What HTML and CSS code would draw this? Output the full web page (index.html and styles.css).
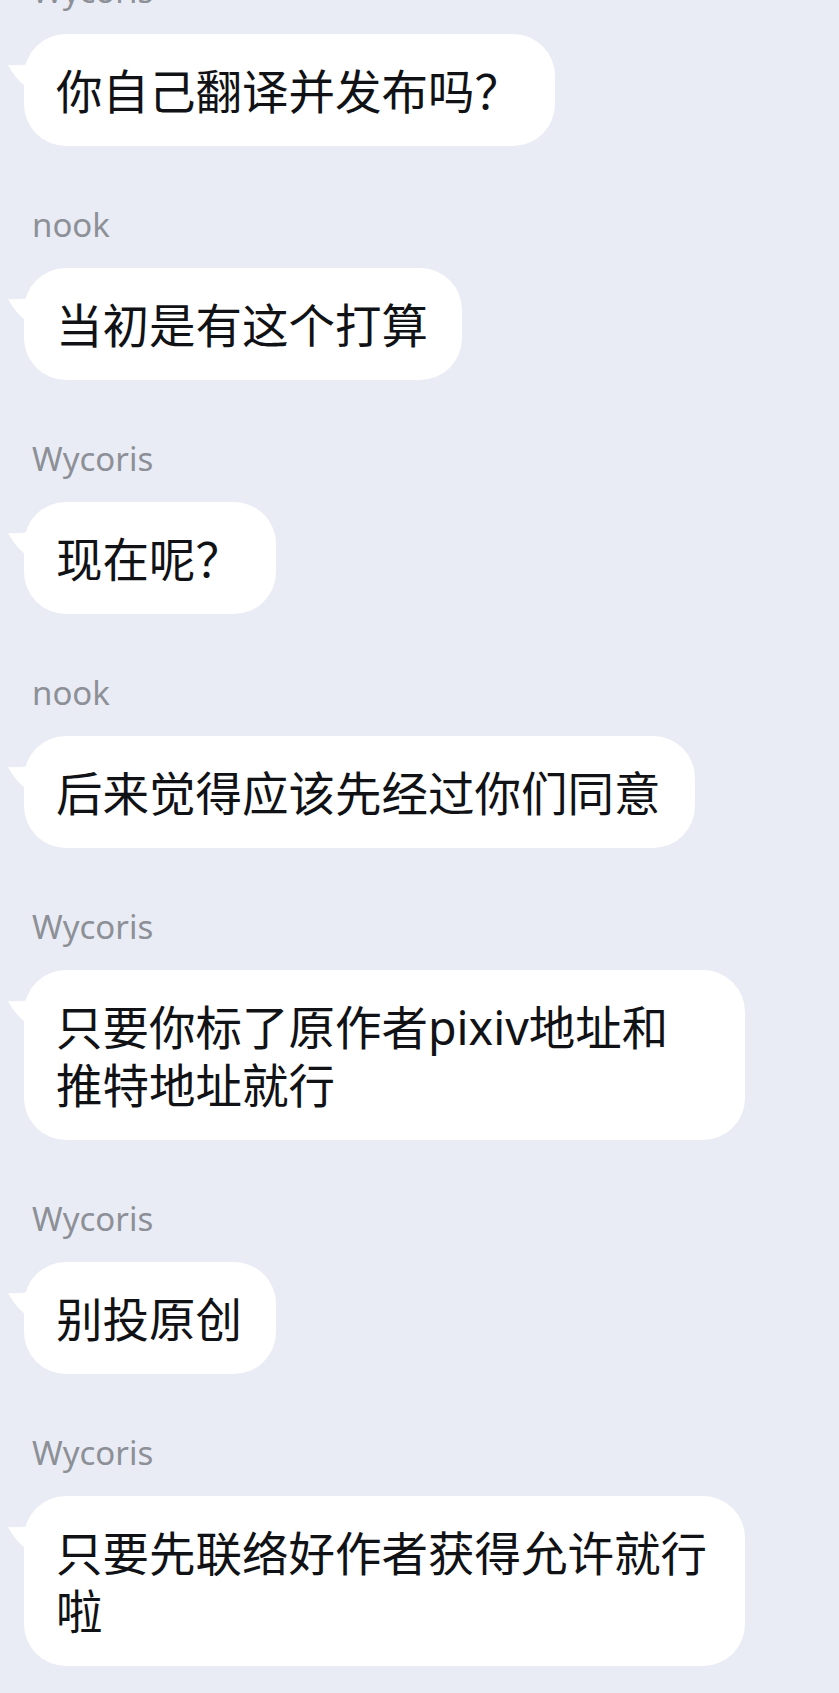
FILE: index.html
```html
<!DOCTYPE html>
<html lang="zh-CN">

<head>
    <meta charset="UTF-8">
    <meta name="viewport" content="width=device-width, initial-scale=1.0">
    <title>聊天记录</title>
    <link rel="stylesheet" href="styles.css">
</head>

<body>

    <div class="chat">
        <div class="msg">
            <div class="name">Wycoris</div>
            <div class="bubble">
                <svg class="tail" viewBox="0 0 22 24"><path d="M0 1 Q9 2 22 0 L22 24 L17 22 Q7 14 0 1 Z"/></svg>
                你自己翻译并发布吗？
            </div>
        </div>
        <div class="msg">
            <div class="name">nook</div>
            <div class="bubble">
                <svg class="tail" viewBox="0 0 22 24"><path d="M0 1 Q9 2 22 0 L22 24 L17 22 Q7 14 0 1 Z"/></svg>
                当初是有这个打算
            </div>
        </div>
        <div class="msg">
            <div class="name">Wycoris</div>
            <div class="bubble">
                <svg class="tail" viewBox="0 0 22 24"><path d="M0 1 Q9 2 22 0 L22 24 L17 22 Q7 14 0 1 Z"/></svg>
                现在呢？
            </div>
        </div>
        <div class="msg">
            <div class="name">nook</div>
            <div class="bubble">
                <svg class="tail" viewBox="0 0 22 24"><path d="M0 1 Q9 2 22 0 L22 24 L17 22 Q7 14 0 1 Z"/></svg>
                后来觉得应该先经过你们同意
            </div>
        </div>
        <div class="msg">
            <div class="name">Wycoris</div>
            <div class="bubble">
                <svg class="tail" viewBox="0 0 22 24"><path d="M0 1 Q9 2 22 0 L22 24 L17 22 Q7 14 0 1 Z"/></svg>
                只要你标了原作者pixiv地址和推特地址就行
            </div>
        </div>
        <div class="msg">
            <div class="name">Wycoris</div>
            <div class="bubble">
                <svg class="tail" viewBox="0 0 22 24"><path d="M0 1 Q9 2 22 0 L22 24 L17 22 Q7 14 0 1 Z"/></svg>
                别投原创
            </div>
        </div>
        <div class="msg">
            <div class="name">Wycoris</div>
            <div class="bubble">
                <svg class="tail" viewBox="0 0 22 24"><path d="M0 1 Q9 2 22 0 L22 24 L17 22 Q7 14 0 1 Z"/></svg>
                只要先联络好作者获得允许就行啦
            </div>
        </div>
    </div>

</body>

</html>
```

FILE: styles.css
```css
*{
    margin: 0;
    padding: 0;
    box-sizing: border-box;
}
body{
    width: 100vw;
    min-height: 100vh;
    background: #e9ecf4;
    font-family: "Noto Sans", "Noto Sans CJK SC", sans-serif;
    overflow: hidden;
}
.chat{
    display: flex;
    flex-direction: column;
    gap: 61px;
    margin-top: -27px;
    padding-left: 24px;
}
.msg{
    display: flex;
    flex-direction: column;
    align-items: flex-start;
    gap: 25px;
}
.name{
    font-size: 33px;
    line-height: 36px;
    color: #8d9097;
    padding-left: 8px;
}
.bubble{
    position: relative;
    max-width: 721px;
    background: #fff;
    color: #111216;
    font-size: 46.5px;
    line-height: 58px;
    padding: 28px 34px 26px 32px;
    border-radius: 42px;
}
.tail{
    position: absolute;
    left: -16px;
    top: 30px;
    width: 22px;
    height: 24px;
    fill: #fff;
}
```
